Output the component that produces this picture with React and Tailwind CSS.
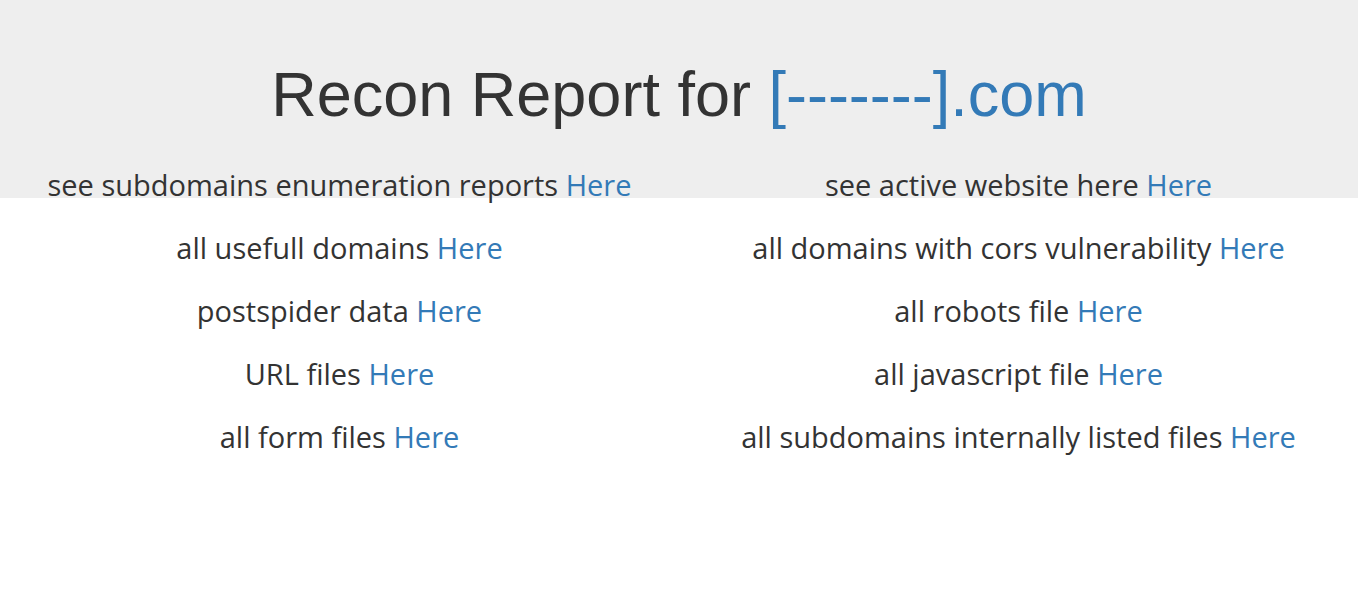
import React from 'react';

const left = [
  'see subdomains enumeration reports',
  'all usefull domains',
  'postspider data',
  'URL files',
  'all form files',
];

const right = [
  'see active website here',
  'all domains with cors vulnerability',
  'all robots file',
  'all javascript file',
  'all subdomains internally listed files',
];

const Item = ({ label }) => (
  <div className="h-[63px] flex items-center justify-center whitespace-nowrap">
    <span>
      {label} <a href="#" className="text-[#337ab7]">Here</a>
    </span>
  </div>
);

const App = () => {
  return (
    <div className="min-h-[592px] bg-[linear-gradient(to_bottom,#eeeeee_0px,#eeeeee_198px,#ffffff_198px)] text-[#333333]">
      <h1
        className="pt-[60px] text-center text-[63px] leading-[1.1] font-normal"
        style={{ fontFamily: '"Liberation Sans", Arial, sans-serif' }}
      >
        Recon Report for <span className="text-[#337ab7]">[-------].com</span>
      </h1>

      <div
        className="mt-[24px] grid grid-cols-2 text-[29px]"
        style={{ fontFamily: '"Open Sans", sans-serif' }}
      >
        <div>
          {left.map((l) => (
            <Item key={l} label={l} />
          ))}
        </div>
        <div>
          {right.map((r) => (
            <Item key={r} label={r} />
          ))}
        </div>
      </div>
    </div>
  );
};

export default App;
